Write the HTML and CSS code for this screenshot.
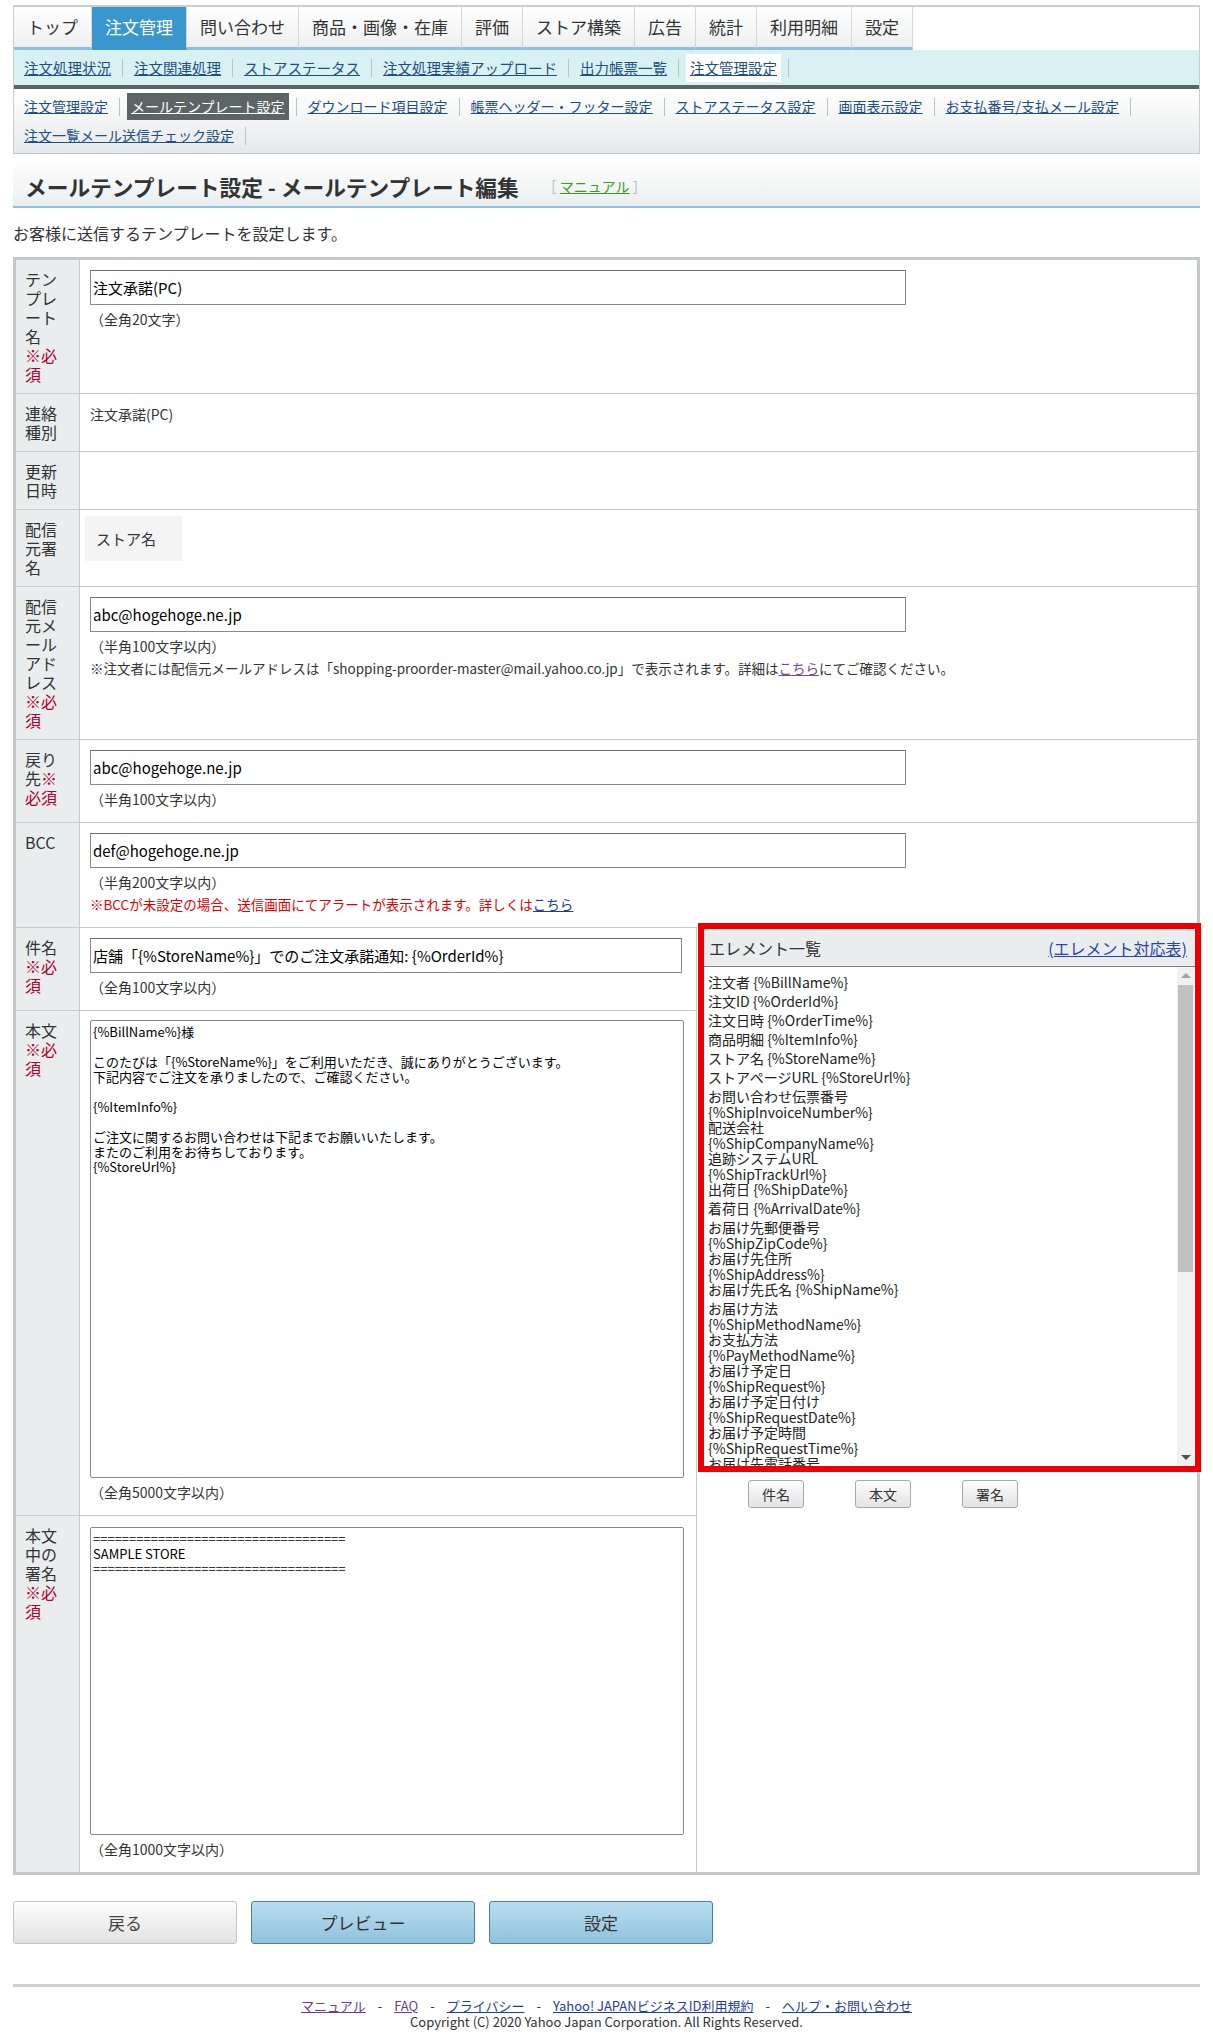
FILE: index.html
```html
<!doctype html>
<html lang="ja">
<head>
  <meta charset="UTF-8">
  <title>メールテンプレート設定 - メールテンプレート編集</title>
  <link rel="stylesheet" href="styles.css">
</head>
<body>
  <div class="page">
    <div class="header">
      <ul class="gnav">
        <li><a href="#">トップ</a></li>
        <li class="current"><a href="#">注文管理</a></li>
        <li><a href="#">問い合わせ</a></li>
        <li><a href="#">商品・画像・在庫</a></li>
        <li><a href="#">評価</a></li>
        <li><a href="#">ストア構築</a></li>
        <li><a href="#">広告</a></li>
        <li><a href="#">統計</a></li>
        <li><a href="#">利用明細</a></li>
        <li><a href="#">設定</a></li>
      </ul>
      <ul class="subnav">
        <li><a href="#">注文処理状況</a></li>
        <li><a href="#">注文関連処理</a></li>
        <li><a href="#">ストアステータス</a></li>
        <li><a href="#">注文処理実績アップロード</a></li>
        <li><a href="#">出力帳票一覧</a></li>
        <li class="current"><a href="#">注文管理設定</a></li>
      </ul>
      <ul class="localnav">
        <li><a href="#">注文管理設定</a></li>
        <li class="current"><a href="#">メールテンプレート設定</a></li>
        <li><a href="#">ダウンロード項目設定</a></li>
        <li><a href="#">帳票ヘッダー・フッター設定</a></li>
        <li><a href="#">ストアステータス設定</a></li>
        <li><a href="#">画面表示設定</a></li>
        <li><a href="#">お支払番号/支払メール設定</a></li>
        <li><a href="#">注文一覧メール送信チェック設定</a></li>
      </ul>
    </div>

    <div class="title-bar">
      <h1>メールテンプレート設定 - メールテンプレート編集</h1>
      <span class="manual">［ <a href="#">マニュアル</a> ］</span>
    </div>

    <p class="lead">お客様に送信するテンプレートを設定します。</p>

    <table class="form-table">
      <colgroup>
        <col class="col-label">
        <col class="col-main">
        <col>
      </colgroup>
      <tr>
        <th class="label">テンプレート名<br><span class="req">※必須</span></th>
        <td class="field" colspan="2">
          <input class="text-input wide" type="text" value="注文承諾(PC)">
          <p class="hint">（全角20文字）</p>
        </td>
      </tr>
      <tr>
        <th class="label">連絡種別</th>
        <td class="field" colspan="2"><p class="value">注文承諾(PC)</p></td>
      </tr>
      <tr>
        <th class="label">更新日時</th>
        <td class="field" colspan="2"></td>
      </tr>
      <tr>
        <th class="label">配信元署名</th>
        <td class="field" colspan="2"><div class="store-name">ストア名</div></td>
      </tr>
      <tr>
        <th class="label">配信元メールアドレス<br><span class="req">※必須</span></th>
        <td class="field" colspan="2">
          <input class="text-input wide" type="text" value="abc@hogehoge.ne.jp">
          <p class="hint">（半角100文字以内）</p>
          <p class="note">※注文者には配信元メールアドレスは「shopping-proorder-master@mail.yahoo.co.jp」で表示されます。詳細は<a class="visited" href="#">こちら</a>にてご確認ください。</p>
        </td>
      </tr>
      <tr>
        <th class="label">戻り先<span class="req">※必須</span></th>
        <td class="field" colspan="2">
          <input class="text-input wide" type="text" value="abc@hogehoge.ne.jp">
          <p class="hint">（半角100文字以内）</p>
        </td>
      </tr>
      <tr>
        <th class="label">BCC</th>
        <td class="field" colspan="2">
          <input class="text-input wide" type="text" value="def@hogehoge.ne.jp">
          <p class="hint">（半角200文字以内）</p>
          <p class="note alert">※BCCが未設定の場合、送信画面にてアラートが表示されます。詳しくは<a href="#">こちら</a></p>
        </td>
      </tr>
      <tr>
        <th class="label">件名<br><span class="req">※必須</span></th>
        <td class="field main">
          <input class="text-input" type="text" value="店舗「{%StoreName%}」でのご注文承諾通知: {%OrderId%}">
          <p class="hint">（全角100文字以内）</p>
        </td>
        <td class="side" rowspan="3">
          <div class="element-box">
            <div class="element-head">
              <span>エレメント一覧</span>
              <a href="#">(エレメント対応表)</a>
            </div>
            <div class="element-body">
              <div class="element-list">
                <div class="el">注文者 {%BillName%}</div>
                <div class="el">注文ID {%OrderId%}</div>
                <div class="el">注文日時 {%OrderTime%}</div>
                <div class="el">商品明細 {%ItemInfo%}</div>
                <div class="el">ストア名 {%StoreName%}</div>
                <div class="el">ストアページURL {%StoreUrl%}</div>
                <div class="el">お問い合わせ伝票番号</div>
                <div class="el code">{%ShipInvoiceNumber%}</div>
                <div class="el">配送会社</div>
                <div class="el code">{%ShipCompanyName%}</div>
                <div class="el">追跡システムURL</div>
                <div class="el code">{%ShipTrackUrl%}</div>
                <div class="el">出荷日 {%ShipDate%}</div>
                <div class="el">着荷日 {%ArrivalDate%}</div>
                <div class="el">お届け先郵便番号</div>
                <div class="el code">{%ShipZipCode%}</div>
                <div class="el">お届け先住所</div>
                <div class="el code">{%ShipAddress%}</div>
                <div class="el">お届け先氏名 {%ShipName%}</div>
                <div class="el">お届け方法</div>
                <div class="el code">{%ShipMethodName%}</div>
                <div class="el">お支払方法</div>
                <div class="el code">{%PayMethodName%}</div>
                <div class="el">お届け予定日</div>
                <div class="el code">{%ShipRequest%}</div>
                <div class="el">お届け予定日付け</div>
                <div class="el code">{%ShipRequestDate%}</div>
                <div class="el">お届け予定時間</div>
                <div class="el code">{%ShipRequestTime%}</div>
                <div class="el">お届け先電話番号</div>
                <div class="el code">{%ShipPhoneNumber%}</div>
              </div>
              <div class="scrollbar">
                <div class="sb-btn"><span class="arrow-up"></span></div>
                <div class="sb-thumb"></div>
                <div class="sb-track"></div>
                <div class="sb-btn"><span class="arrow-down"></span></div>
              </div>
            </div>
          </div>
          <div class="insert-buttons">
            <button class="small-btn">件名</button>
            <button class="small-btn">本文</button>
            <button class="small-btn">署名</button>
          </div>
        </td>
      </tr>
      <tr>
        <th class="label">本文<br><span class="req">※必須</span></th>
        <td class="field main">
          <textarea class="text-area body-area">{%BillName%}様

このたびは「{%StoreName%}」をご利用いただき、誠にありがとうございます。
下記内容でご注文を承りましたので、ご確認ください。

{%ItemInfo%}

ご注文に関するお問い合わせは下記までお願いいたします。
またのご利用をお待ちしております。
{%StoreUrl%}</textarea>
          <p class="hint">（全角5000文字以内）</p>
        </td>
      </tr>
      <tr>
        <th class="label">本文中の署名<br><span class="req">※必須</span></th>
        <td class="field main">
          <textarea class="text-area sign-area">===================================
SAMPLE STORE
===================================</textarea>
          <p class="hint">（全角1000文字以内）</p>
        </td>
      </tr>
    </table>

    <div class="actions">
      <button class="btn">戻る</button>
      <button class="btn btn-blue">プレビュー</button>
      <button class="btn btn-blue">設定</button>
    </div>

    <div class="footer">
      <p class="footer-links">
        <a class="visited" href="#">マニュアル</a><span class="sep">-</span><a class="visited" href="#">FAQ</a><span class="sep">-</span><a href="#">プライバシー</a><span class="sep">-</span><a href="#">Yahoo! JAPANビジネスID利用規約</a><span class="sep">-</span><a href="#">ヘルプ・お問い合わせ</a>
      </p>
      <p class="copyright">Copyright (C) 2020 Yahoo Japan Corporation. All Rights Reserved.</p>
    </div>
  </div>
</body>
</html>
```

FILE: styles.css
```css
body {
  margin: 0;
  background: #fff;
  color: #333;
  font-family: "Noto Sans CJK JP", "Noto Sans", sans-serif;
}

.page {
  padding: 0 13px;
}

a {
  color: #1f4f80;
}

/* ヘッダー */
.header {
  margin-top: 5px;
  border-top: 2px solid #c9cecf;
  border-left: 1px solid #c9cecf;
  border-right: 1px solid #c9cecf;
}

.gnav,
.subnav,
.localnav {
  list-style: none;
  margin: 0;
  padding: 0;
}

.gnav {
  display: flex;
  background: #fff;
}

.gnav a {
  display: block;
  height: 40px;
  padding: 0 13px;
  line-height: 40px;
  font-size: 17px;
  color: #333;
  text-decoration: none;
  background: linear-gradient(#fff, #eef0f0);
  border-right: 1px solid #d6d9da;
  border-bottom: 3px solid #8ebfe1;
}

.gnav .current a {
  background: #3a97cd;
  color: #fff;
  border-bottom-color: #3a97cd;
}

.subnav {
  display: flex;
  align-items: center;
  height: 35px;
  padding-left: 6px;
  background: #d8f2f4;
  border-bottom: 4px solid #5a6465;
}

.subnav li,
.localnav li {
  display: flex;
  align-items: center;
}

.subnav li::after,
.localnav li::after {
  content: "";
  width: 1px;
  height: 18px;
  margin: 0 7px;
  background: #b9c3c6;
}

.subnav a,
.localnav a {
  padding: 0 4px;
  line-height: 28px;
  font-size: 14px;
}

.subnav a {
  font-size: 14.5px;
}

.subnav .current a {
  background: #fff;
}

.localnav {
  display: flex;
  flex-wrap: wrap;
  row-gap: 2px;
  padding: 4px 0 4px 6px;
  background: linear-gradient(#fff, #e6e9ea);
  border-bottom: 1px solid #c3c9ca;
}

.localnav li {
  height: 27px;
}

.localnav a {
  line-height: 27px;
}

.localnav .current a {
  background: #5b6566;
  color: #fff;
}

/* タイトル */
.title-bar {
  display: flex;
  align-items: center;
  height: 40px;
  margin-top: 6px;
  padding: 6px 0 0 12px;
  background: linear-gradient(#fff, #eaeeef);
  border-bottom: 2px solid #8fc4e5;
}

.title-bar h1 {
  margin: 0;
  font-size: 21.7px;
  font-weight: bold;
  color: #333;
}

.manual {
  margin-left: 24px;
  font-size: 14px;
  color: #bbb;
}

.manual a {
  color: #3d9a1f;
}

.lead {
  margin: 15px 0 14px;
  font-size: 16px;
  line-height: 20px;
}

/* フォーム */
.form-table {
  width: 100%;
  box-sizing: border-box;
  table-layout: fixed;
  border-collapse: separate;
  border-spacing: 0;
  border: 3px solid #c3c9cb;
}

.col-label {
  width: 64px;
}

.col-main {
  width: 617px;
}

.label {
  padding: 10px 10px 9px 9px;
  background: #e9edee;
  border-right: 1px solid #c6cccd;
  border-bottom: 1px solid #c6cccd;
  font-size: 16px;
  font-weight: normal;
  line-height: 19px;
  text-align: left;
  vertical-align: top;
  line-break: anywhere;
  color: #333;
}

.req {
  color: #b2002d;
}

.field {
  padding: 10px 12px 14px 10px;
  border-bottom: 1px solid #c6cccd;
  vertical-align: top;
  font-size: 14px;
}

.field.main {
  border-right: 1px solid #c6cccd;
}

.form-table tr:last-child > * {
  border-bottom: none;
}

.text-input {
  display: block;
  box-sizing: border-box;
  width: 592px;
  height: 35px;
  margin: 0;
  padding: 0 2px;
  border: 1px solid #8a8a8a;
  border-top-color: #6f6f6f;
  font-family: inherit;
  font-size: 15px;
  color: #000;
}

.text-input.wide {
  width: 816px;
}

.hint {
  margin: 5px 0 0;
  line-height: 18px;
}

.value {
  margin: 0;
  line-height: 20px;
}

.note {
  margin: 4px 0 0;
  line-height: 18px;
  font-size: 13.5px;
}

.note .visited {
  color: #6e4a9e;
}

.note.alert {
  color: #e00000;
}

.note.alert a {
  color: #1a3c9c;
}

.store-name {
  width: 86px;
  height: 45px;
  margin: -4px 0 0 -5px;
  padding-left: 11px;
  line-height: 45px;
  font-size: 15px;
  color: #333;
  background: #f4f4f4;
}

.text-area {
  display: block;
  box-sizing: border-box;
  width: 594px;
  margin: 0;
  padding: 3px 2px;
  border: 1px solid #8a8a8a;
  border-radius: 2px;
  font-family: inherit;
  font-size: 13px;
  line-height: 15px;
  color: #000;
  resize: none;
}

.body-area {
  height: 458px;
  margin-top: -1px;
}

.sign-area {
  height: 308px;
  margin-top: 1px;
}

/* エレメント一覧 */
.side {
  padding: 0 0 0 1px;
  vertical-align: top;
}

.element-box {
  margin: -5px -4px 0 0;
  border: 6px solid #ee0000;
  background: #fff;
}

.element-head {
  display: flex;
  justify-content: space-between;
  align-items: center;
  height: 37px;
  padding: 0 8px 0 5px;
  background: #e9edee;
  border-bottom: 1px solid #808080;
  font-size: 16px;
}

.element-head a {
  color: #2a45a8;
}

.element-body {
  display: flex;
  height: 499px;
}

.element-list {
  flex: 1;
  overflow: hidden;
  padding: 6px 4px 0;
  font-size: 14px;
  color: #222;
}

.el {
  line-height: 19px;
  white-space: nowrap;
}

.el.code {
  line-height: 12px;
}

.scrollbar {
  display: flex;
  flex-direction: column;
  width: 17px;
  margin-right: 1px;
  background: #f1f1f1;
}

.sb-btn {
  display: flex;
  justify-content: center;
  align-items: center;
  height: 17px;
}

.arrow-up {
  border-left: 5px solid transparent;
  border-right: 5px solid transparent;
  border-bottom: 5px solid #a3a3a3;
}

.arrow-down {
  border-left: 5px solid transparent;
  border-right: 5px solid transparent;
  border-top: 5px solid #505050;
}

.sb-thumb {
  height: 287px;
  margin: 1px 1px 0;
  background: #c1c1c1;
}

.sb-track {
  flex: 1;
}

.insert-buttons {
  display: flex;
  gap: 51px;
  margin-top: 8px;
  padding-left: 50px;
}

.small-btn {
  width: 56px;
  height: 28px;
  padding: 0;
  border: 1px solid #a9a9a9;
  border-radius: 3px;
  background: linear-gradient(#fdfdfd, #e3e3e3);
  font-family: inherit;
  font-size: 14px;
  color: #333;
}

/* ボタン */
.actions {
  display: flex;
  gap: 14px;
  margin-top: 26px;
}

.btn {
  width: 224px;
  height: 43px;
  padding: 0;
  border: 1px solid #c4c4c4;
  border-radius: 3px;
  background: linear-gradient(#fdfdfd, #e2e2e2);
  font-family: inherit;
  font-size: 17px;
  color: #444;
}

.btn-blue {
  border-color: #4d7e9f;
  background: linear-gradient(#b9ddf0, #8fc3dd);
  color: #333;
}

/* フッター */
.footer {
  margin-top: 40px;
  padding-top: 11px;
  border-top: 3px solid #cfcfcf;
  text-align: center;
  font-size: 13px;
}

.footer p {
  margin: 0;
  line-height: 16px;
}

.footer-links a {
  color: #1f3d99;
}

.footer-links a.visited {
  color: #6b3e8f;
}

.sep {
  margin: 0 12px;
}

.copyright {
  color: #333;
}
```
